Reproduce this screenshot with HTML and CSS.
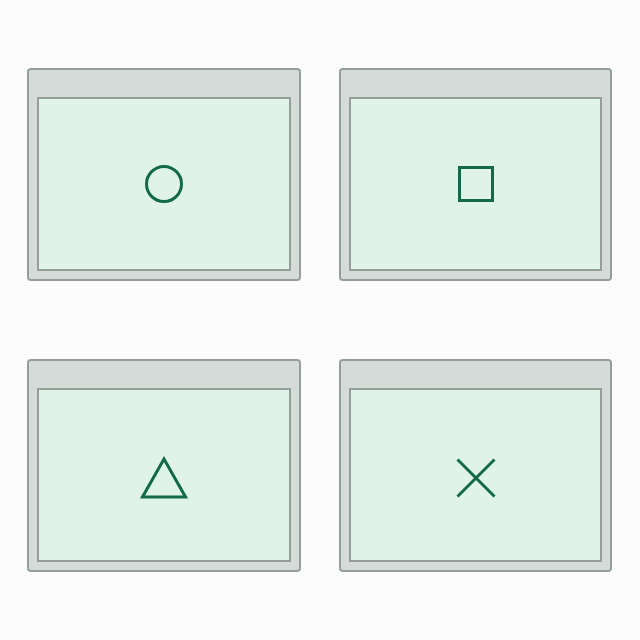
FILE: index.html
```html
<!DOCTYPE html>
<html>
<head>
<meta charset="utf-8">
<link rel="stylesheet" href="styles.css">
</head>
<body>
<div class="grid">
  <div class="win"><div class="pane">
    <svg width="40" height="40" viewBox="0 0 40 40"><circle cx="20" cy="20" r="17.5" fill="none" stroke="#13694b" stroke-width="3"/></svg>
  </div></div>
  <div class="win"><div class="pane">
    <svg width="40" height="40" viewBox="0 0 40 40"><rect x="3.5" y="3.5" width="33" height="33" fill="none" stroke="#13694b" stroke-width="3"/></svg>
  </div></div>
  <div class="win"><div class="pane">
    <svg class="low" width="48" height="44" viewBox="0 0 48 44"><polygon points="24,3 45.5,41 2.5,41" fill="none" stroke="#13694b" stroke-width="3" stroke-linejoin="miter"/></svg>
  </div></div>
  <div class="win"><div class="pane">
    <svg class="low" width="40" height="40" viewBox="0 0 40 40"><path d="M1.5 1.5 L38.5 38.5 M38.5 1.5 L1.5 38.5" fill="none" stroke="#13694b" stroke-width="3"/></svg>
  </div></div>
</div>
</body>
</html>
```
FILE: styles.css
```css
html, body {
  margin: 0;
  padding: 0;
  background: #fbfcfb;
}
.grid {
  display: grid;
  grid-template-columns: 274px 273px;
  column-gap: 38px;
  row-gap: 78px;
  padding: 68px 0 0 27px;
}
.win {
  height: 213px;
  box-sizing: border-box;
  border: 2px solid #959f9a;
  border-radius: 4px;
  background: #d5dbd8;
  padding: 27px 8px 8px 8px;
  display: flex;
}
.pane {
  flex: 1;
  border: 2px solid #959f9a;
  background: #dff3e8;
  display: flex;
  align-items: center;
  justify-content: center;
}
svg { display: block; }
.low { margin-top: 6px; }
```
